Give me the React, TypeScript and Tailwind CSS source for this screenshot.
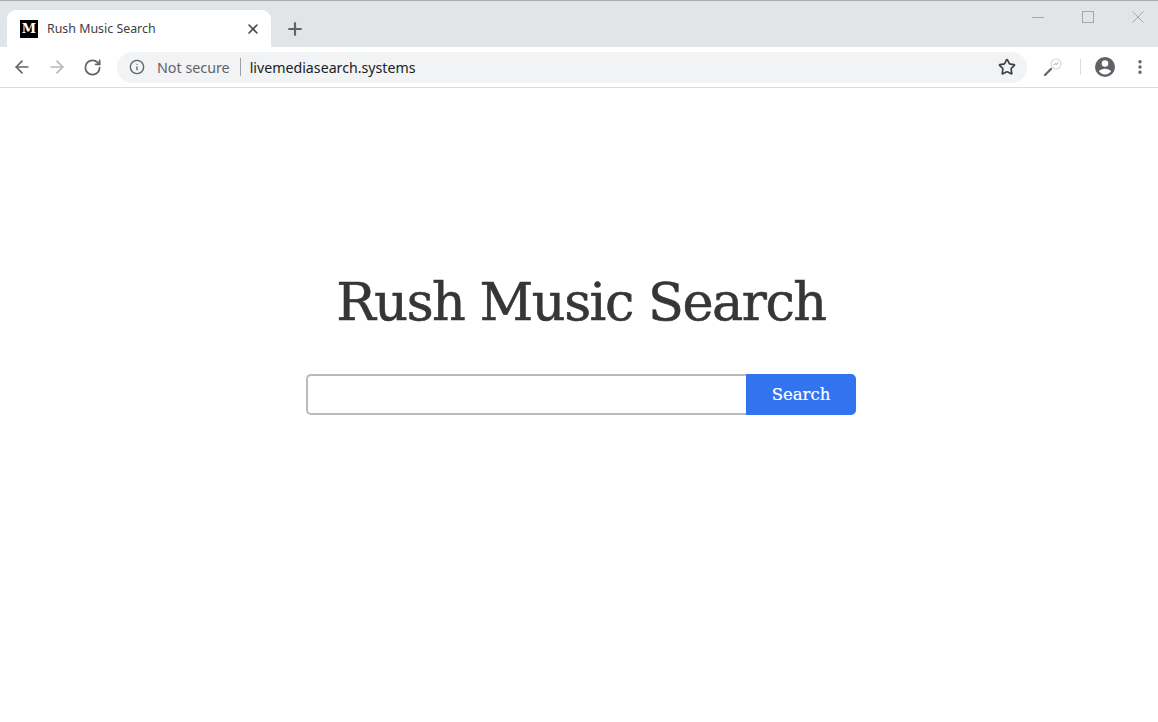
import { ArrowLeft, ArrowRight, Info, MoreVertical, Plus, RotateCw, Star, X } from 'lucide-react'

function Favicon() {
  return (
    <div className="w-[18px] h-[18px] bg-black flex items-center justify-center shrink-0">
      <span className="text-white text-[13px] font-bold leading-none font-['DejaVu_Serif',serif]">M</span>
    </div>
  )
}

function WindowControls() {
  return (
    <div className="absolute left-[1032px] top-[9px] flex items-center gap-[38px]">
      <svg width="12" height="14" viewBox="0 0 12 14">
        <path d="M0 7.500H12" stroke="#a4a7ab" strokeWidth="1" />
      </svg>
      <svg width="12" height="14" viewBox="0 0 12 14">
        <rect x="0.500" y="1.500" width="11" height="11" fill="none" stroke="#a4a7ab" strokeWidth="1" />
      </svg>
      <svg width="12" height="14" viewBox="0 0 12 14">
        <path d="M0.500 1.500 11.500 12.500M11.500 1.500 0.500 12.500" stroke="#a4a7ab" strokeWidth="1" />
      </svg>
    </div>
  )
}

function Toolbar() {
  return (
    <div className="h-[40px] bg-white flex items-center">
      <div className="w-[117px] flex items-center shrink-0 pl-[12px] gap-[15px]">
        <ArrowLeft className="w-[20px] h-[20px] text-[#5f6368]" strokeWidth={2} />
        <ArrowRight className="w-[20px] h-[20px] text-[#b4b6b9]" strokeWidth={2} />
        <RotateCw className="w-[19px] h-[19px] text-[#5f6368] ml-[1px]" strokeWidth={2.2} />
      </div>
      <div className="w-[910px] h-[31px] rounded-full bg-[#f1f3f4] flex items-center pl-[12px] pr-[11px] shrink-0">
        <Info className="w-[16px] h-[16px] text-[#5f6368] shrink-0" strokeWidth={2} />
        <span className="ml-[12px] pt-px text-[14.300px] text-[#5f6368]">Not secure</span>
        <div className="w-px h-[18px] bg-[#9aa0a6] ml-[10px]" />
        <span className="ml-[9px] pt-px text-[14.200px] text-[#202124]">livemediasearch.systems</span>
        <Star className="w-[18px] h-[18px] text-[#3c4043] ml-auto" strokeWidth={2.2} />
      </div>
      <div className="flex-1 flex items-center pl-[17px]">
        <svg width="18" height="18" viewBox="0 0 18 18" fill="none">
          <path d="M1 17 L7 11" stroke="#5f6368" strokeWidth="2.2" strokeLinecap="round" />
          <circle cx="12" cy="6" r="5" stroke="#d5d9dd" strokeWidth="1.2" fill="#fff" />
          <path d="M9.500 7 L11.500 5.500 L12.500 6.500 L14.500 4.500" stroke="#a9c8ee" strokeWidth="1.2" />
        </svg>
        <div className="w-px h-[16px] bg-[#dadce0] ml-[18px]" />
        <svg className="ml-[14px]" width="20" height="20" viewBox="0 0 20 20">
          <path
            fill="#5f6368"
            fillRule="evenodd"
            d="M10 0a10 10 0 1 0 0 20 10 10 0 0 0 0-20Zm0 3.200a3.300 3.300 0 1 1 0 6.600 3.300 3.300 0 0 1 0-6.600Zm0 14.200a7.600 7.600 0 0 1-6.100-3.100c.9-1.600 3.900-2.500 6.100-2.500s5.200.9 6.100 2.500a7.600 7.600 0 0 1-6.100 3.100Z"
          />
        </svg>
        <MoreVertical className="w-[18px] h-[18px] text-[#5f6368] ml-[16px]" strokeWidth={2.6} />
      </div>
    </div>
  )
}

export default function App() {
  return (
    <div className="w-[1158px] h-[722px] bg-white flex flex-col overflow-hidden font-['Noto_Sans',sans-serif]">
      {/* Chrome */}
      <div className="h-[47px] bg-[#e2e5e8] border-t border-[#a9abad] flex items-end pl-[7px] relative">
        <div className="w-[264px] h-[37px] bg-white rounded-t-[9px] flex items-center pl-[13px] pr-[10px]">
          <Favicon />
          <span className="ml-[9px] text-[12.400px] pt-px text-[#3c4043]">Rush Music Search</span>
          <X className="w-[16px] h-[16px] text-[#45484c] ml-auto" strokeWidth={2.4} />
        </div>
        <Plus className="w-[20px] h-[20px] text-[#5f6368] ml-[14px] mb-[8px]" strokeWidth={2.6} />
        <WindowControls />
      </div>
      <Toolbar />
      <div className="h-px bg-[#dadce0]" />

      {/* Page */}
      <main className="flex-1 flex flex-col items-center pt-[178px] pl-[4px]">
        <h1 className="text-[52.500px] leading-[72px] tracking-[-1.500px] text-[#363636] [-webkit-text-stroke:0.6px_#363636] font-['DejaVu_Serif',serif]">
          Rush Music Search
        </h1>
        <div className="flex mt-[36px] w-[550px] h-[41px]">
          <input className="flex-1 min-w-0 border-2 border-r-0 border-[#bababa] rounded-l-[5px] bg-white outline-none" />
          <button className="w-[110px] pt-[2px] bg-[#3273f0] text-white text-[16.500px] [-webkit-text-stroke:0.2px_#ffffff] rounded-r-[5px] font-['DejaVu_Serif',serif]">
            Search
          </button>
        </div>
      </main>
    </div>
  )
}
